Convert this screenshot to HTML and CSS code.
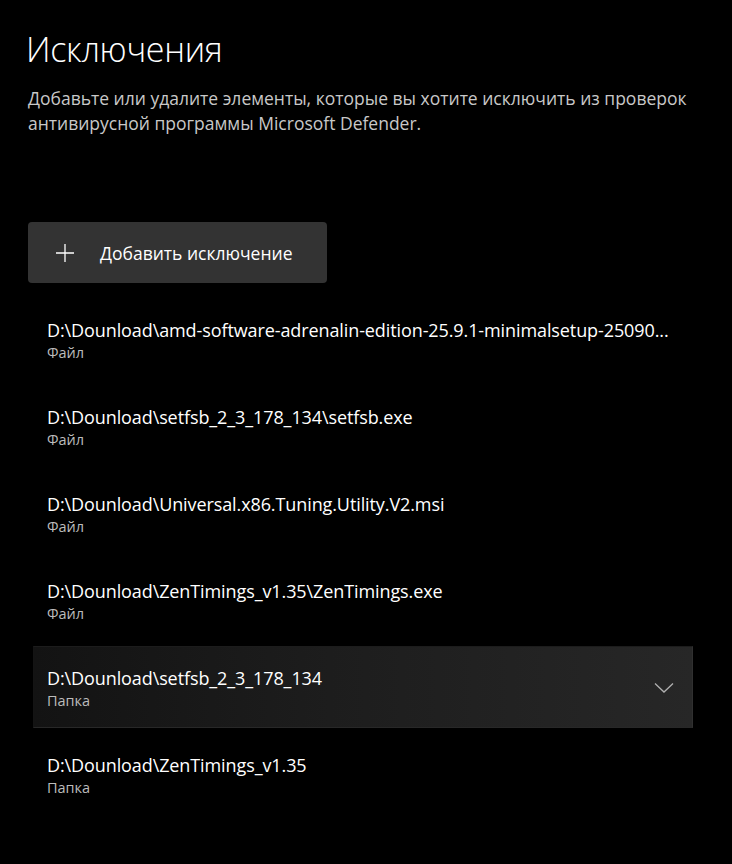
FILE: index.html
```html
<!DOCTYPE html>
<html lang="ru">
<head>
    <meta charset="UTF-8">
    <meta name="viewport" content="width=device-width, initial-scale=1.0">
    <title>Исключения</title>
    <link rel="stylesheet" href="styles.css">
</head>
<body>
    <div class="page">
        <h1>Исключения</h1>
        <p class="description">
            Добавьте или удалите элементы, которые вы хотите исключить из проверок антивирусной программы Microsoft Defender.
        </p>

        <button class="add-button">
            <svg class="plus" width="20" height="20" viewBox="0 0 20 20">
                <path d="M10 1 V19 M1 10 H19" stroke="#fff" stroke-width="1.3" fill="none"/>
            </svg>
            <span>Добавить исключение</span>
        </button>

        <div class="exclusions">
            <div class="item">
                <div class="item-text">
                    <div class="path">D:\Dounload\amd-software-adrenalin-edition-25.9.1-minimalsetup-25090...</div>
                    <div class="kind">Файл</div>
                </div>
            </div>
            <div class="item">
                <div class="item-text">
                    <div class="path">D:\Dounload\setfsb_2_3_178_134\setfsb.exe</div>
                    <div class="kind">Файл</div>
                </div>
            </div>
            <div class="item">
                <div class="item-text">
                    <div class="path">D:\Dounload\Universal.x86.Tuning.Utility.V2.msi</div>
                    <div class="kind">Файл</div>
                </div>
            </div>
            <div class="item">
                <div class="item-text">
                    <div class="path">D:\Dounload\ZenTimings_v1.35\ZenTimings.exe</div>
                    <div class="kind">Файл</div>
                </div>
            </div>
            <div class="item hover">
                <div class="item-text">
                    <div class="path">D:\Dounload\setfsb_2_3_178_134</div>
                    <div class="kind">Папка</div>
                </div>
                <svg class="chevron" width="20" height="12" viewBox="0 0 20 12">
                    <path d="M1 1.5 L10 10 L19 1.5" stroke="#b0b0b0" stroke-width="1.3" fill="none"/>
                </svg>
            </div>
            <div class="item">
                <div class="item-text">
                    <div class="path">D:\Dounload\ZenTimings_v1.35</div>
                    <div class="kind">Папка</div>
                </div>
            </div>
        </div>
    </div>
</body>
</html>
```

FILE: styles.css
```css
* {
    margin: 0;
    padding: 0;
    box-sizing: border-box;
}

body {
    font-family: "Open Sans", "Noto Sans", sans-serif;
    background: #000;
    color: #fff;
    width: 732px;
    height: 864px;
    overflow: hidden;
}

.page {
    padding: 26px 0 0 28px;
}

h1 {
    font-weight: 300;
    font-size: 34px;
    line-height: 46px;
    margin-left: -2px;
    letter-spacing: -0.3px;
}

.description {
    margin-top: 14px;
    width: 690px;
    font-size: 17.5px;
    line-height: 25px;
    color: #c8c8c8;
}

.add-button {
    margin-top: 86px;
    width: 299px;
    height: 61px;
    background: #333;
    border: none;
    border-radius: 4px;
    display: flex;
    align-items: center;
    gap: 25px;
    padding-left: 27px;
    font-family: inherit;
    font-size: 17.5px;
    color: #fff;
}

.plus {
    flex-shrink: 0;
}

.exclusions {
    margin-top: 15px;
    margin-left: 5px;
    display: flex;
    flex-direction: column;
    gap: 5px;
}

.item {
    width: 660px;
    height: 82px;
    padding: 19px 18px 0 13px;
    display: flex;
    align-items: flex-start;
    justify-content: space-between;
    border: 1px solid transparent;
}

.item.hover {
    background: linear-gradient(90deg, #131313 0%, #1d1d1d 45%, #272727 100%);
    border-color: #1c1c1c #303030 #282828 #141414;
}

.item-text {
    display: flex;
    flex-direction: column;
    gap: 1px;
}

.path {
    font-size: 18px;
    line-height: 24px;
    letter-spacing: -0.1px;
    white-space: nowrap;
}

.kind {
    font-size: 14.5px;
    line-height: 20px;
    color: #bcbcbc;
}

.chevron {
    align-self: center;
    margin-top: -18px;
}
```
